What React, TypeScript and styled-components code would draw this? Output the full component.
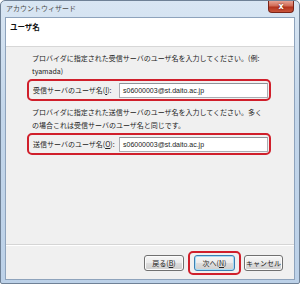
import React from 'react'
import styled, { createGlobalStyle } from 'styled-components'

const Global = createGlobalStyle`
  html, body { margin: 0; padding: 0; }
  body {
    width: 300px;
    height: 284px;
    overflow: hidden;
    font-family: "Noto Sans CJK JP", "Liberation Sans", sans-serif;
  }
`

const Frame = styled.div`
  width: 300px;
  height: 284px;
  box-sizing: border-box;
  display: flex;
  flex-direction: column;
  background: linear-gradient(180deg, #d9e6f3 0%, #c3d6ea 40%, #bcd1e8 100%);
  border: 1px solid #6f8196;
  border-radius: 5px 5px 2px 2px;
  padding: 0 4px 3px 4px;
`

const TitleBar = styled.div`
  height: 16px;
  display: flex;
  align-items: flex-start;
  justify-content: space-between;
`

const Title = styled.span`
  font-size: 7px;
  line-height: 14px;
  color: #4a4a4a;
  padding-left: 1px;
`

const CloseBtn = styled.div`
  width: 26px;
  height: 12px;
  margin-right: 1px;
  box-sizing: border-box;
  border: 1px solid #7a2418;
  border-top: none;
  border-radius: 0 0 4px 4px;
  background: linear-gradient(180deg, #e8a394 0%, #d06a55 45%, #b3331d 55%, #c9553b 100%);
  color: #fff;
  font-family: "DejaVu Sans", sans-serif;
  font-size: 8px;
  font-weight: bold;
  line-height: 11px;
  text-align: center;
  text-shadow: 0 0 2px #5a1208;
`

const Client = styled.div`
  flex: 1;
  display: flex;
  flex-direction: column;
  background: #f0f0f0;
  border: 1px solid #8ea3bc;
`

const Header = styled.div`
  height: 29px;
  background: #fff;
  border-bottom: 1px solid #d7d7d7;
  padding: 2px 0 0 4px;
  box-sizing: border-box;
  font-size: 7.5px;
  font-weight: bold;
  line-height: 13px;
  color: #111;
`

const Body = styled.div`
  flex: 1;
  padding: 5px 23px 0 21px;
  display: flex;
  flex-direction: column;
`

const Desc = styled.div`
  font-size: 7px;
  line-height: 13px;
  color: #222;
  padding-left: 5px;
  white-space: nowrap;
`

const Mark = styled.div<{ $gap?: number }>`
  display: flex;
  align-items: center;
  height: 22px;
  box-sizing: border-box;
  border: 2px solid #d01f2b;
  border-radius: 5px;
  padding: 0 1px 0 4px;
  margin-top: 1px;
  margin-bottom: ${p => p.$gap ?? 0}px;
`

const Label = styled.span`
  font-size: 7px;
  color: #222;
  width: 86px;
  white-space: nowrap;
  u { text-decoration: underline; }
`

const Input = styled.div`
  flex: 1;
  height: 15px;
  box-sizing: border-box;
  border: 1px solid #abadb3;
  border-top-color: #8e9399;
  background: #fff;
  font-family: "Liberation Sans", "Noto Sans", sans-serif;
  font-size: 7px;
  line-height: 13px;
  padding-left: 3px;
  color: #222;
`

const Footer = styled.div`
  height: 33px;
  border-top: 1px solid #d5d5d5;
  box-shadow: inset 0 1px 0 #fff;
  display: flex;
  align-items: center;
  justify-content: flex-end;
  padding: 1px 11px 0 0;
  gap: 3px;
`

const Button = styled.div<{ $w: number; $default?: boolean }>`
  width: ${p => p.$w}px;
  height: 16px;
  box-sizing: border-box;
  border: 1px solid ${p => (p.$default ? '#3c7fb1' : '#707070')};
  border-radius: 3px;
  background: linear-gradient(180deg, #f6f6f6 0%, #ebebeb 48%, #dddddd 52%, #cfcfcf 100%);
  box-shadow: inset 0 0 0 1px ${p => (p.$default ? '#a9dcf6' : '#fbfbfb')};
  font-size: 7px;
  line-height: 14px;
  text-align: center;
  color: #222;
  white-space: nowrap;
  u { text-decoration: underline; }
`

const Ring = styled.div`
  border: 2px solid #d01f2b;
  border-radius: 5px;
  padding: 2px 4px;
  margin-left: 1px;
`

export default function App() {
  return (
    <>
      <Global />
      <Frame>
        <TitleBar>
          <Title>アカウントウィザード</Title>
          <CloseBtn>x</CloseBtn>
        </TitleBar>
        <Client>
          <Header>ユーザ名</Header>
          <Body>
            <Desc>
              プロバイダに指定された受信サーバのユーザ名を入力してください。(例:
              <br />
              tyamada)
            </Desc>
            <Mark $gap={5}>
              <Label>受信サーバのユーザ名(<u>I</u>):</Label>
              <Input>s06000003@st.daito.ac.jp</Input>
            </Mark>
            <Desc>
              プロバイダに指定された送信サーバのユーザ名を入力してください。多く
              <br />
              の場合これは受信サーバのユーザ名と同じです。
            </Desc>
            <Mark>
              <Label>送信サーバのユーザ名(<u>O</u>):</Label>
              <Input>s06000003@st.daito.ac.jp</Input>
            </Mark>
          </Body>
          <Footer>
            <Button $w={40}>戻る(<u>B</u>)</Button>
            <Ring>
              <Button $w={41} $default>次へ(<u>N</u>)</Button>
            </Ring>
            <Button $w={39}>キャンセル</Button>
          </Footer>
        </Client>
      </Frame>
    </>
  )
}
